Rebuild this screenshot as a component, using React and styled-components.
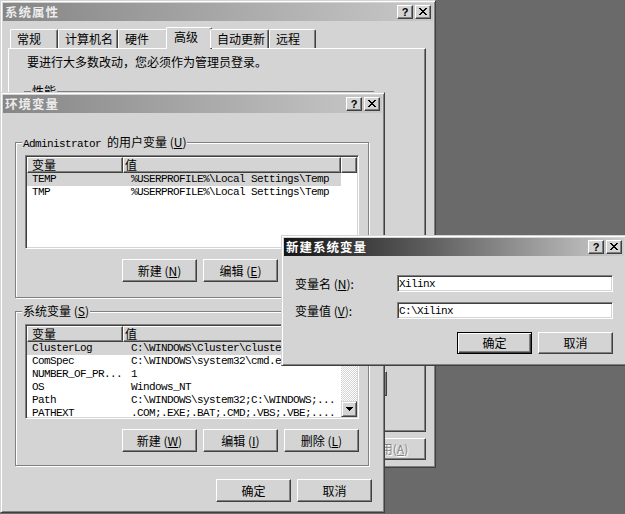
import React from "react";
import styled, { createGlobalStyle, css } from "styled-components";

const FACE = "#d4d4d4";
const CJK = `"Noto Sans CJK SC", "Noto Sans", sans-serif`;
const MONO = `"Liberation Mono", "Noto Sans CJK SC", monospace`;

const GlobalStyle = createGlobalStyle`
  html, body { margin: 0; padding: 0; }
  body { background: #6a6a6a; font-family: ${CJK}; font-size: 12px; color: #000; }
  * { box-sizing: border-box; }
`;

const Desktop = styled.div`
  position: relative;
  width: 625px;
  height: 514px;
  overflow: hidden;
  background: #6a6a6a;
`;

const Window = styled.div`
  position: absolute;
  left: ${(p) => p.$x}px;
  top: ${(p) => p.$y}px;
  width: ${(p) => p.$w}px;
  height: ${(p) => p.$h}px;
  background: ${FACE};
  border: 1px solid;
  border-color: ${FACE} #404040 #404040 ${FACE};
  box-shadow: inset 1px 1px 0 #fff, inset -1px -1px 0 #808080;
  padding: 2px;
  display: flex;
  flex-direction: column;
  overflow: hidden;
`;

const TitleBar = styled.div`
  flex: none;
  height: 18px;
  display: flex;
  align-items: center;
  justify-content: space-between;
  padding: 0 2px 0 2px;
  background: ${(p) =>
    p.$active
      ? "linear-gradient(to right, #151515, #5a5a5a 40%, #cdcdcd)"
      : "linear-gradient(to right, #868686, #c8c8c8)"};
`;

const TitleText = styled.span`
  font-family: ${CJK};
  font-weight: 700;
  font-size: 12.5px;
  line-height: 18px;
  letter-spacing: 1px;
  color: ${(p) => (p.$active ? "#ffffff" : "#ececec")};
`;

const CaptionGroup = styled.div`
  display: flex;
  gap: 2px;
`;

const CaptionButton = styled.div`
  width: 16px;
  height: 14px;
  background: ${FACE};
  border: 1px solid;
  border-color: #fff #404040 #404040 #fff;
  box-shadow: inset -1px -1px 0 #808080;
  display: flex;
  align-items: center;
  justify-content: center;
  font-family: "Liberation Sans", sans-serif;
  font-weight: 700;
  font-size: 11px;
  line-height: 12px;
  color: #000;
  padding-bottom: 1px;
`;

const CloseGlyph = () => (
  <svg width="8" height="7" viewBox="0 0 8 7" shapeRendering="crispEdges">
    <path
      d="M0 0h2v1H0zM6 0h2v1H6zM1 1h2v1H1zM5 1h2v1H5zM2 2h4v1H2zM3 3h2v1H3zM2 4h4v1H2zM1 5h2v1H1zM5 5h2v1H5zM0 6h2v1H0zM6 6h2v1H6z"
      fill="#000"
    />
  </svg>
);

const Captions = () => (
  <CaptionGroup>
    <CaptionButton>?</CaptionButton>
    <CaptionButton>
      <CloseGlyph />
    </CaptionButton>
  </CaptionGroup>
);

const Key = styled.span`
  text-decoration: underline;
  text-underline-offset: 1px;
`;

const Mono = styled.span`
  font-family: ${MONO};
  font-size: 11px;
  letter-spacing: -0.6px;
`;

/* ---------- buttons ---------- */
const Button = styled.button`
  flex: none;
  width: 75px;
  height: ${(p) => p.$h || 23}px;
  padding: 0;
  margin: 0;
  font-family: ${CJK};
  font-size: 12px;
  line-height: 14px;
  background: ${FACE};
  border: 1px solid;
  border-color: #fff #404040 #404040 #fff;
  box-shadow: inset -1px -1px 0 #808080;
  color: #000;
  ${(p) =>
    p.$default &&
    css`
      border-color: #000;
      box-shadow: inset 1px 1px 0 #fff, inset -1px -1px 0 #404040, inset -2px -2px 0 #808080;
    `}
  ${(p) =>
    p.$disabled &&
    css`
      color: #848484;
      text-shadow: 1px 1px 0 #fff;
    `}
`;

const ButtonRow = styled.div`
  display: flex;
  justify-content: flex-end;
  gap: 6px;
  margin-top: ${(p) => p.$mt || 0}px;
  margin-right: ${(p) => p.$mr || 0}px;
  padding-right: ${(p) => p.$pr || 0}px;
`;

/* ---------- system properties ---------- */
const TabStrip = styled.div`
  position: relative;
  z-index: 1;
  display: flex;
  align-items: flex-end;
  height: 21px;
  margin: 6px 0 0 5px;
  padding-left: 2px;
`;

const Tab = styled.div`
  flex: none;
  width: ${(p) => p.$w}px;
  height: 19px;
  padding-left: 6px;
  background: ${FACE};
  border-top: 1px solid #fff;
  border-left: 1px solid #fff;
  border-right: 1px solid #404040;
  border-radius: 2px 2px 0 0;
  box-shadow: inset -1px 0 0 #808080;
  font-size: 12px;
  line-height: 17px;
  white-space: nowrap;
  overflow: hidden;
  ${(p) =>
    p.$selected &&
    css`
      height: 22px;
      margin: 0 -2px -1px;
      padding-left: 7px;
      line-height: 17px;
    `}
`;

const TabPanel = styled.div`
  width: 418px;
  height: 384px;
  margin-left: 5px;
  border: 1px solid;
  border-color: #fff #404040 #404040 #fff;
  box-shadow: inset -1px -1px 0 #808080;
  padding: 5px 0 0 15px;
  display: flex;
  flex-direction: column;
`;

const Notice = styled.div`
  padding-left: 3px;
  line-height: 16px;
  white-space: nowrap;
`;

const GroupBox = styled.div`
  position: relative;
  flex: none;
  width: ${(p) => (p.$w ? `${p.$w}px` : "auto")};
  margin-top: ${(p) => p.$mt || 0}px;
  border: 1px solid #808080;
  box-shadow: inset 1px 1px 0 #fff, 1px 1px 0 #fff;
  padding: 12px 9px ${(p) => p.$pb || 9}px;
`;

const GroupLabel = styled.span`
  position: absolute;
  top: -8px;
  left: 6px;
  padding: 0 1px;
  background: ${FACE};
  line-height: 14px;
  white-space: nowrap;
`;

const SettingsRow = styled.div`
  display: flex;
  justify-content: flex-end;
  margin-top: 20px;
`;

const PanelButtons = styled.div`
  display: flex;
  justify-content: flex-end;
  gap: 6px;
  margin-top: auto;
  margin-bottom: 39px;
  padding-right: 38px;
`;

/* ---------- list view ---------- */
const ListView = styled.div`
  height: ${(p) => p.$h}px;
  background: #fff;
  border: 1px solid;
  border-color: #808080 #fff #fff #808080;
  box-shadow: inset 1px 1px 0 #404040, inset -1px -1px 0 ${FACE};
  padding: 1px;
  display: flex;
  overflow: hidden;
`;

const ListColumns = styled.div`
  flex: 1;
  min-width: 0;
  display: flex;
  flex-direction: column;
  overflow: hidden;
`;

const HeaderRow = styled.div`
  display: flex;
  flex: none;
  height: 16px;
`;

const HeaderCell = styled.div`
  flex: ${(p) => (p.$w ? `0 0 ${p.$w}px` : "1")};
  height: 16px;
  padding-left: ${(p) => p.$pl || 0}px;
  background: ${FACE};
  border: 1px solid;
  border-color: #fff #404040 #404040 #fff;
  box-shadow: inset -1px -1px 0 #808080;
  font-size: 12px;
  line-height: 14px;
  white-space: nowrap;
`;

const Row = styled.div`
  display: flex;
  flex: none;
  width: 314px;
  height: 13px;
  background: ${(p) => (p.$selected ? FACE : "transparent")};
`;

const Cell = styled.div`
  flex: 0 0 ${(p) => p.$w}px;
  padding-left: ${(p) => p.$pl}px;
  overflow: hidden;
  white-space: nowrap;
  font-family: ${MONO};
  font-size: 11px;
  letter-spacing: -0.6px;
  line-height: 13px;
`;

const ScrollBar = styled.div`
  flex: 0 0 16px;
  display: flex;
  flex-direction: column;
`;

const ScrollArrow = styled.div`
  flex: 0 0 16px;
  background: ${FACE};
  border: 1px solid;
  border-color: ${FACE} #404040 #404040 ${FACE};
  box-shadow: inset 1px 1px 0 #fff, inset -1px -1px 0 #808080;
  display: flex;
  align-items: center;
  justify-content: center;
`;

const ScrollTrack = styled.div`
  flex: 1;
  background: repeating-conic-gradient(#ffffff 0 25%, ${FACE} 0 50%) 0 0 / 2px 2px;
`;

const ScrollThumb = styled.div`
  height: 22px;
  background: ${FACE};
  border: 1px solid;
  border-color: ${FACE} #404040 #404040 ${FACE};
  box-shadow: inset 1px 1px 0 #fff, inset -1px -1px 0 #808080;
`;

const DownArrow = () => (
  <svg width="7" height="4" viewBox="0 0 7 4" shapeRendering="crispEdges">
    <path d="M0 0h7v1H0zM1 1h5v1H1zM2 2h3v1H2zM3 3h1v1H3z" fill="#000" />
  </svg>
);
const UpArrow = () => (
  <svg width="7" height="4" viewBox="0 0 7 4" shapeRendering="crispEdges">
    <path d="M3 0h1v1H3zM2 1h3v1H2zM1 2h5v1H1zM0 3h7v1H0z" fill="#000" />
  </svg>
);

const VarList = ({ rows, height, scroll }) => (
  <ListView $h={height}>
    <ListColumns>
      <HeaderRow>
        <HeaderCell $w={96} $pl={4}>变量</HeaderCell>
        <HeaderCell $w={218} $pl={1}>值</HeaderCell>
        {!scroll && <HeaderCell />}
      </HeaderRow>
      {rows.map(([name, value, sel]) => (
        <Row key={name} $selected={sel}>
          <Cell $w={96} $pl={5}>{name}</Cell>
          <Cell $w={218} $pl={8}>{value}</Cell>
        </Row>
      ))}
    </ListColumns>
    {scroll && (
      <ScrollBar>
        <ScrollArrow>
          <UpArrow />
        </ScrollArrow>
        <ScrollThumb />
        <ScrollTrack />
        <ScrollArrow>
          <DownArrow />
        </ScrollArrow>
      </ScrollBar>
    )}
  </ListView>
);

/* ---------- env dialog ---------- */
const EnvBody = styled.div`
  display: flex;
  flex-direction: column;
  padding: 0 13px 0 12px;
`;

/* ---------- new variable dialog ---------- */
const NewBody = styled.div`
  display: flex;
  flex-direction: column;
  align-items: flex-start;
  padding: 19px 0 0 11px;
`;

const FieldGrid = styled.div`
  display: grid;
  grid-template-columns: 102px 216px;
  row-gap: 10px;
  align-items: center;
`;

const FieldLabel = styled.label`
  font-size: 12px;
  line-height: 14px;
  white-space: nowrap;
`;

const TextInput = styled.input`
  width: 216px;
  height: 17px;
  margin: 0;
  padding: 0 1px;
  background: #fff;
  border: 1px solid;
  border-color: #808080 #fff #fff #808080;
  box-shadow: inset 1px 1px 0 #404040, inset -1px -1px 0 ${FACE};
  font-family: ${MONO};
  font-size: 11px;
  letter-spacing: -0.6px;
  color: #000;
  outline: none;
`;

const NewButtons = styled(ButtonRow)`
  width: 318px;
`;

const userVars = [
  ["TEMP", "%USERPROFILE%\\Local Settings\\Temp", true],
  ["TMP", "%USERPROFILE%\\Local Settings\\Temp"],
];

const sysVars = [
  ["ClusterLog", "C:\\WINDOWS\\Cluster\\cluster.log", true],
  ["ComSpec", "C:\\WINDOWS\\system32\\cmd.exe"],
  ["NUMBER_OF_PR...", "1"],
  ["OS", "Windows_NT"],
  ["Path", "C:\\WINDOWS\\system32;C:\\WINDOWS;..."],
  ["PATHEXT", ".COM;.EXE;.BAT;.CMD;.VBS;.VBE;...."],
  ["PROCESSOR_A...", "x86"],
];

const tabs = [
  { label: "常规", w: 48 },
  { label: "计算机名", w: 60 },
  { label: "硬件", w: 50 },
  { label: "高级", w: 46, selected: true },
  { label: "自动更新", w: 59 },
  { label: "远程", w: 47 },
];

export default function App() {
  return (
    <>
      <GlobalStyle />
      <Desktop>
        {/* 系统属性 */}
        <Window $x={0} $y={0} $w={436} $h={468}>
          <TitleBar>
            <TitleText>系统属性</TitleText>
            <Captions />
          </TitleBar>
          <TabStrip>
            {tabs.map((t) => (
              <Tab key={t.label} $w={t.w} $selected={t.selected}>
                {t.label}
              </Tab>
            ))}
          </TabStrip>
          <TabPanel>
            <Notice>要进行大多数改动，您必须作为管理员登录。</Notice>
            <GroupBox $w={350} $mt={21} $pb={10}>
              <GroupLabel>性能</GroupLabel>
              视觉效果，处理器计划，内存使用，以及虚拟内存
              <SettingsRow>
                <Button>设置(S)</Button>
              </SettingsRow>
            </GroupBox>
            <GroupBox $w={350} $mt={14} $pb={10}>
              <GroupLabel>用户配置文件</GroupLabel>
              与您登录有关的桌面设置
              <SettingsRow>
                <Button>设置(E)</Button>
              </SettingsRow>
            </GroupBox>
            <GroupBox $w={350} $mt={14} $pb={10}>
              <GroupLabel>启动和故障恢复</GroupLabel>
              系统启动、系统失败和调试信息
              <SettingsRow>
                <Button>设置(T)</Button>
              </SettingsRow>
            </GroupBox>
            <PanelButtons>
              <Button $h={25}>环境变量(N)</Button>
              <Button $h={25}>错误报告(R)</Button>
            </PanelButtons>
          </TabPanel>
          <ButtonRow $mt={6} $pr={7}>
            <Button $h={22}>确定</Button>
            <Button $h={22}>取消</Button>
            <Button $h={22} $disabled>
              应用(<Key>A</Key>)
            </Button>
          </ButtonRow>
        </Window>

        {/* 环境变量 */}
        <Window $x={0} $y={92} $w={385} $h={421}>
          <TitleBar>
            <TitleText>环境变量</TitleText>
            <Captions />
          </TitleBar>
          <EnvBody>
            <GroupBox $mt={29} $pb={15}>
              <GroupLabel>
                <Mono>Administrator </Mono>的用户变量 (<Key>U</Key>)
              </GroupLabel>
              <VarList rows={userVars} height={94} />
              <ButtonRow $mt={10}>
                <Button>
                  新建 (<Key>N</Key>)
                </Button>
                <Button>
                  编辑 (<Key>E</Key>)
                </Button>
                <Button>
                  删除 (<Key>D</Key>)
                </Button>
              </ButtonRow>
            </GroupBox>
            <GroupBox $mt={13} $pb={13}>
              <GroupLabel>
                系统变量 (<Key>S</Key>)
              </GroupLabel>
              <VarList rows={sysVars} height={95} scroll />
              <ButtonRow $mt={10}>
                <Button>
                  新建 (<Key>W</Key>)
                </Button>
                <Button>
                  编辑 (<Key>I</Key>)
                </Button>
                <Button>
                  删除 (<Key>L</Key>)
                </Button>
              </ButtonRow>
            </GroupBox>
            <ButtonRow $mt={13} $mr={-3}>
              <Button>确定</Button>
              <Button>取消</Button>
            </ButtonRow>
          </EnvBody>
        </Window>

        {/* 新建系统变量 */}
        <Window $x={281} $y={235} $w={346} $h={131}>
          <TitleBar $active>
            <TitleText $active>新建系统变量</TitleText>
            <Captions />
          </TitleBar>
          <NewBody>
            <FieldGrid>
              <FieldLabel htmlFor="varname">
                变量名 (<Key>N</Key>):
              </FieldLabel>
              <TextInput id="varname" readOnly value="Xilinx" />
              <FieldLabel htmlFor="varvalue">
                变量值 (<Key>V</Key>):
              </FieldLabel>
              <TextInput id="varvalue" readOnly value="C:\Xilinx" />
            </FieldGrid>
            <NewButtons $mt={13}>
              <Button $h={22} $default>
                确定
              </Button>
              <Button $h={22}>取消</Button>
            </NewButtons>
          </NewBody>
        </Window>
      </Desktop>
    </>
  );
}
